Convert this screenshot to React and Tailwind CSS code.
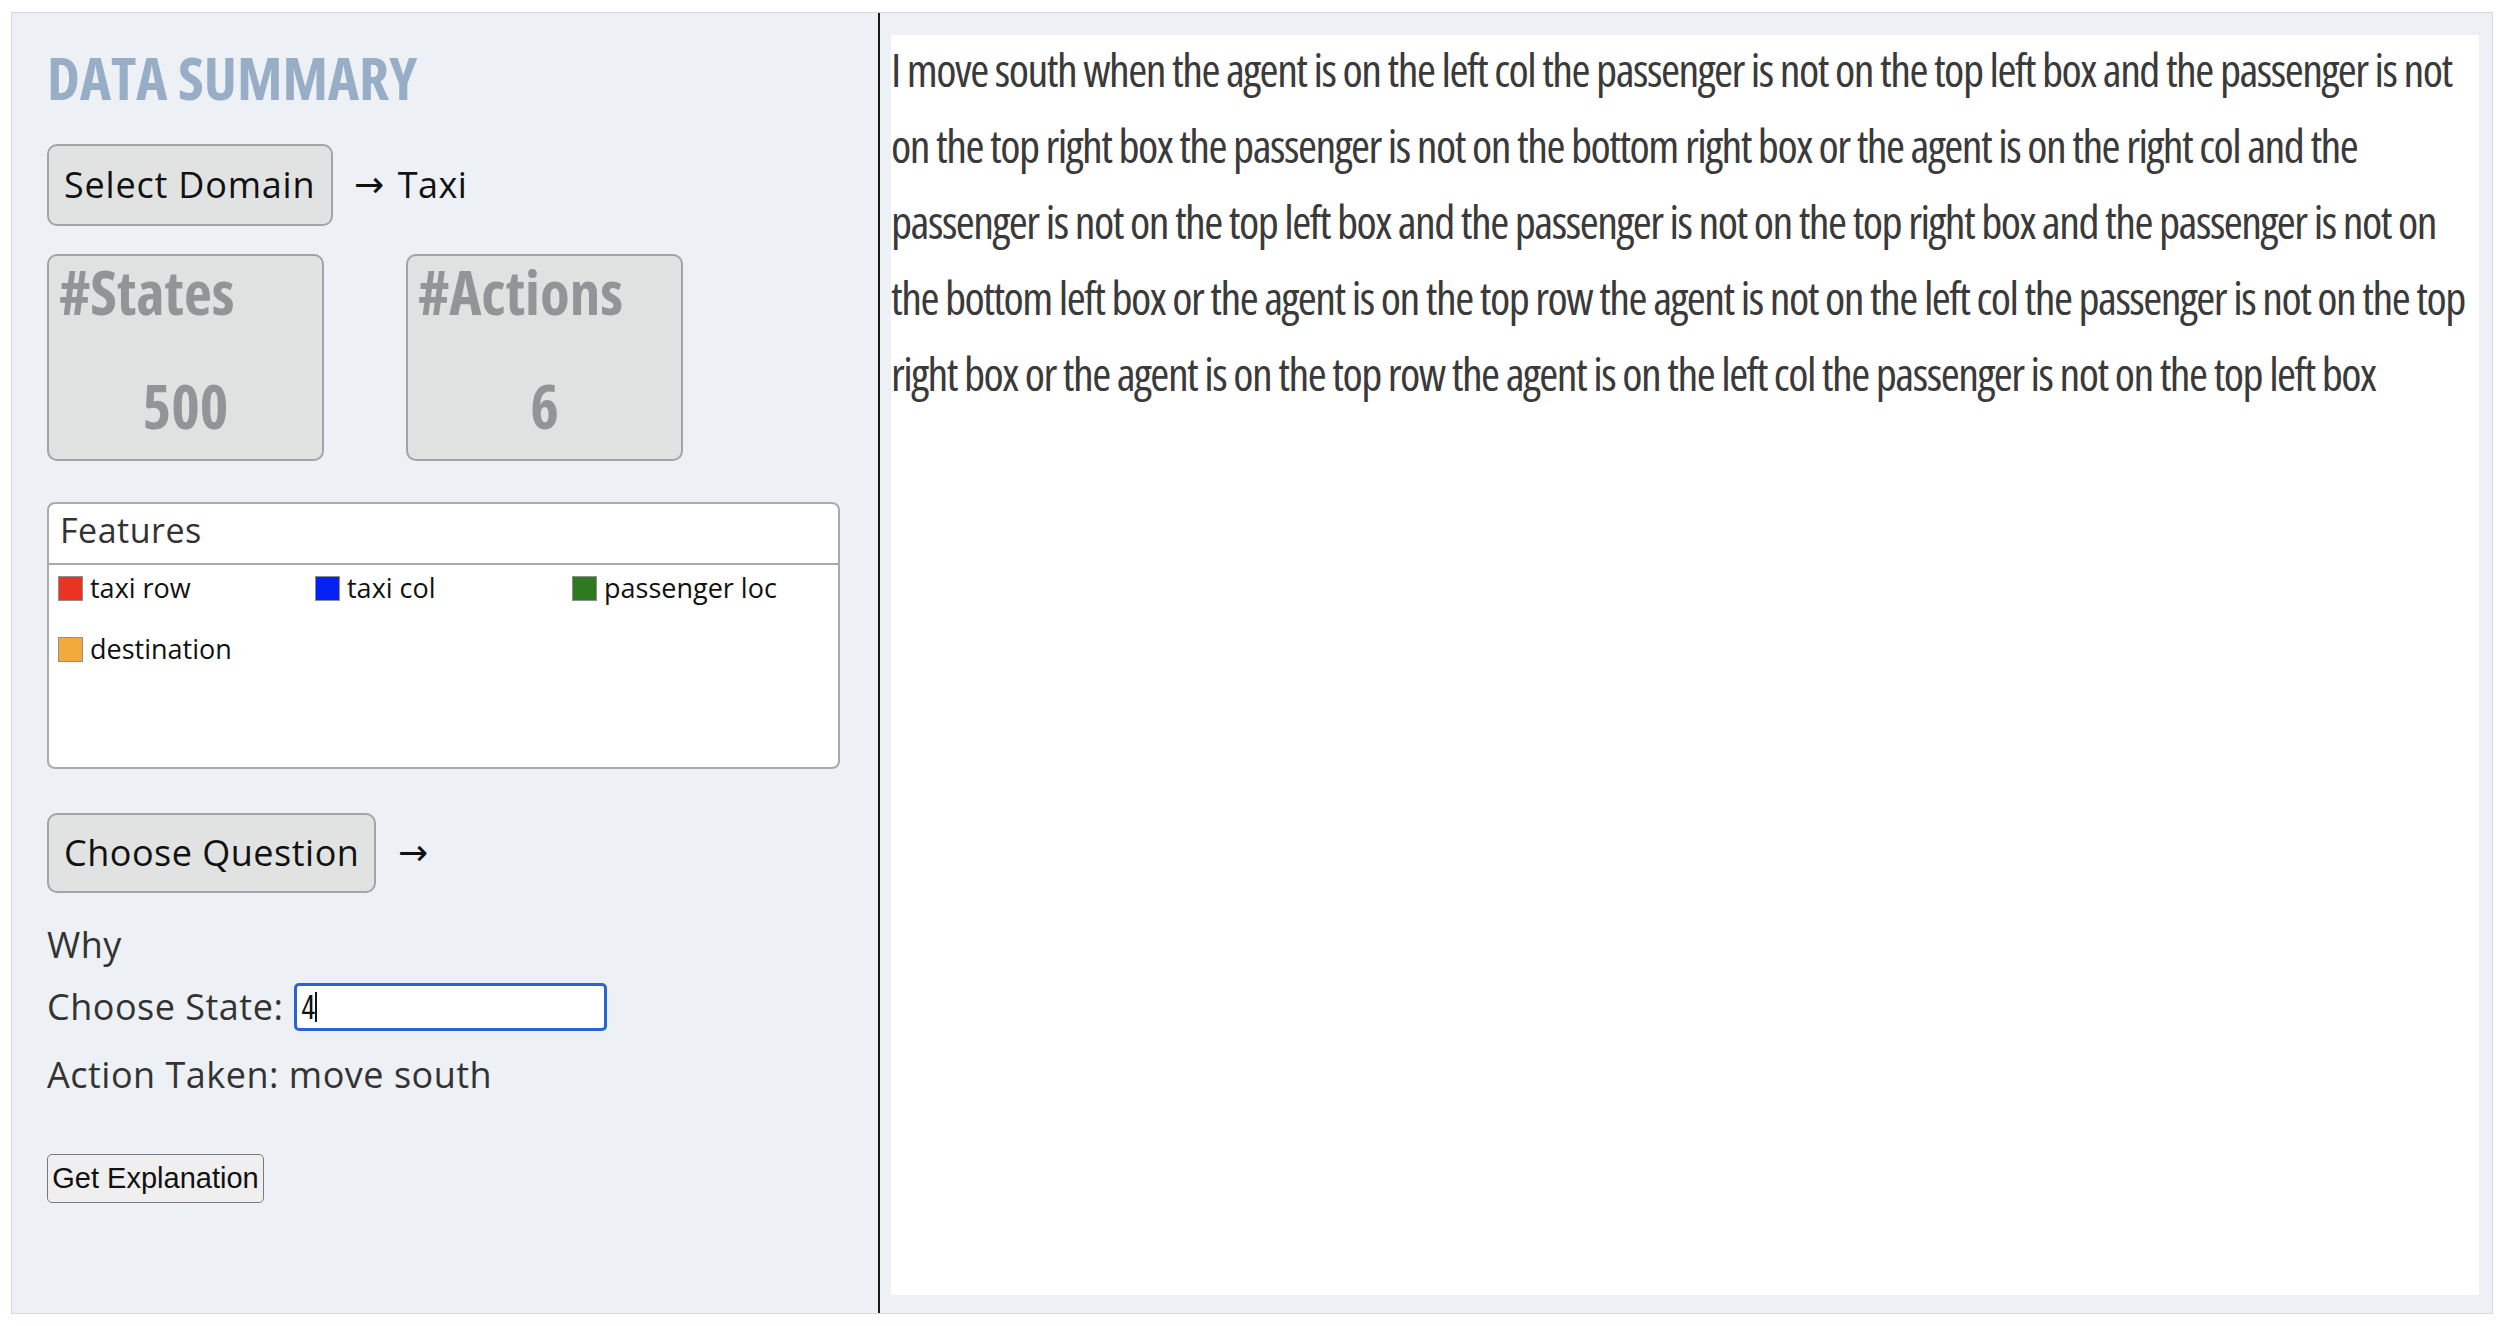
import { useState } from "react";

const features = [
  { name: "taxi row", color: "bg-[#ea3323]" },
  { name: "taxi col", color: "bg-[#0521f5]" },
  { name: "passenger loc", color: "bg-[#2e7b1f]" },
  { name: "destination", color: "bg-[#f2aa3c]" },
];

const stats = [
  { label: "#States", value: "500" },
  { label: "#Actions", value: "6" },
];

// explanation text, broken the same way as the original page wraps it
const explanation = [
  "I move south when the agent is on the left col the passenger is not on the top left box and the passenger is not",
  "on the top right box the passenger is not on the bottom right box or the agent is on the right col and the",
  "passenger is not on the top left box and the passenger is not on the top right box and the passenger is not on",
  "the bottom left box or the agent is on the top row the agent is not on the left col the passenger is not on the top",
  "right box or the agent is on the top row the agent is on the left col the passenger is not on the top left box",
];

const App = () => {
  const [state, setState] = useState("4");

  return (
    <div className="w-[2500px] h-[1326px] bg-white pl-[11px] pt-[12px]">
      <div className="flex w-[2482px] h-[1302px] border border-[#d6d8db] bg-[#edf0f4]">
        <aside className="w-[866px] shrink-0 pl-[35px] pt-[34px] flex flex-col items-start font-['Open_Sans',sans-serif] tracking-[0.5px] text-[#333]">
          <h1 className="h-[60px] leading-[60px] text-[59px] font-bold font-stretch-75% tracking-normal text-[#98aec6]">
            DATA SUMMARY
          </h1>

          <div className="mt-[37px] flex items-center">
            <button className="h-[82px] w-[286px] rounded-[10px] border-2 border-[#a3a4a5] bg-[#e1e2e2] pl-[15px] text-left text-[36px] tracking-[0.8px] text-[#111]">
              Select Domain
            </button>
            <span className="ml-[21px] font-['DejaVu_Sans',sans-serif] text-[36px] text-[#111]">→</span>
            <span className="ml-[13px] text-[36px] text-[#111]">Taxi</span>
          </div>

          <div className="mt-[28px] flex gap-[82px]">
            {stats.map((s) => (
              <div
                key={s.label}
                className="w-[277px] h-[207px] rounded-[10px] border-2 border-[#a2a3a5] bg-[#e0e1e1] pt-[6px] font-bold font-stretch-75% tracking-normal text-[#929497]"
              >
                <div className="h-[60px] leading-[60px] pl-[10px] text-[61px]">{s.label}</div>
                <div className="mt-[54px] h-[60px] leading-[60px] text-center text-[61px]">{s.value}</div>
              </div>
            ))}
          </div>

          <div className="mt-[41px] w-[793px] h-[267px] rounded-[8px] border-2 border-[#aaabac] bg-white">
            <div className="h-[61px] border-b-2 border-[#a9a9a9] pl-[11px] leading-[52px] text-[34px] text-[#333]">
              Features
            </div>
            <div className="grid grid-cols-[257px_257px_257px] gap-y-[31px] pl-[9px] pt-[8px] tracking-normal">
              {features.map((f) => (
                <div key={f.name} className="flex h-[30px] items-center gap-[7px]">
                  <span className={`w-[25px] h-[25px] border border-[#8f8f8f] ${f.color}`} />
                  <span className="text-[27px] text-[#111]">{f.name}</span>
                </div>
              ))}
            </div>
          </div>

          <div className="mt-[44px] flex items-center">
            <button className="h-[80px] w-[329px] rounded-[10px] border-2 border-[#a3a4a5] bg-[#e1e2e2] pl-[15px] text-left text-[36px] tracking-[0.5px] text-[#111]">
              Choose Question
            </button>
            <span className="ml-[22px] font-['DejaVu_Sans',sans-serif] text-[36px] text-[#111]">→</span>
          </div>

          <div className="mt-[28px] h-[48px] leading-[48px] text-[36px]">Why</div>

          <div className="mt-[14px] flex h-[48px] items-center">
            <span className="text-[36px]">Choose State:</span>
            <div className="relative ml-[11px]">
              <input
                value={state}
                onChange={(e) => setState(e.target.value)}
                className="w-[313px] h-[48px] rounded-[5px] border-[3px] border-[#2a63d3] bg-white px-[4px] text-[32px] font-stretch-75% text-[#111] outline-none"
              />
              <span className="absolute left-[21px] top-[9px] h-[30px] w-[2px] bg-[#111]" />
            </div>
          </div>

          <div className="mt-[20px] h-[48px] leading-[48px] text-[36px]">Action Taken: move south</div>

          <button className="mt-[55px] h-[49px] w-[217px] rounded-[5px] border border-[#7a7a7a] bg-[#efefef] text-[29px] tracking-normal text-[#111] font-['Liberation_Sans',sans-serif]">
            Get Explanation
          </button>
        </aside>

        <div className="w-[2px] shrink-0 bg-[#1b1b1b]" />

        <main className="min-w-0 flex-1 pl-[11px] pt-[22px] pr-[13px] pb-[18px]">
          <div className="h-full overflow-hidden bg-white">
            <p className="-mt-[4px] whitespace-nowrap font-['Open_Sans',sans-serif] text-[46px] font-stretch-75% leading-[76px] tracking-[-1.5px] text-[#3a3a3a]">
              {explanation.map((line, i) => (
                <span key={i} className="block">
                  {line}
                </span>
              ))}
            </p>
          </div>
        </main>
      </div>
    </div>
  );
};

export default App;
